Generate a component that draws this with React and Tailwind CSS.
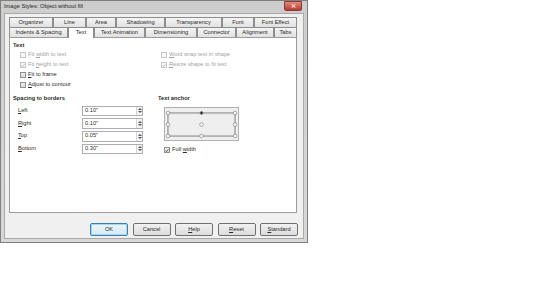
import React from "react";

function Check({ checked, disabled }) {
  return (
    <span
      className={
        disabled
          ? "w-[6px] h-[6px] shrink-0 border border-[#c6c6c6] bg-[#f7f7f7] flex items-center justify-center"
          : "w-[6px] h-[6px] shrink-0 border border-[#8e8f8f] bg-linear-to-b from-[#f0f0f0] to-[#dcdcdc] flex items-center justify-center"
      }
    >
      {checked && (
        <svg width="5" height="5" viewBox="0 0 5 5">
          <path
            d="M0.6 2.5 L1.9 3.9 L4.4 0.9"
            stroke={disabled ? "#a9a9a9" : "#333"}
            strokeWidth="0.9"
            fill="none"
          />
        </svg>
      )}
    </span>
  );
}

function CheckRow({ checked, disabled, children }) {
  return (
    <div className="h-[10px] flex items-center gap-[2px]">
      <Check checked={checked} disabled={disabled} />
      <span className={disabled ? "text-[#a2a2a2]" : "text-[#2a2a2a]"}>{children}</span>
    </div>
  );
}

function Tab({ w, children, selected }) {
  if (selected) {
    return (
      <div
        style={{ width: w }}
        className="h-[11px] -mt-px -mb-px relative z-10 bg-white border border-b-0 border-[#8d8d8d] flex items-center justify-center"
      >
        {children}
      </div>
    );
  }
  return (
    <div
      style={{ width: w }}
      className="h-[10px] border border-b-0 border-[#8d8d8d] bg-linear-to-b from-[#f4f4f4] to-[#e1e1e1] flex items-center justify-center"
    >
      {children}
    </div>
  );
}

function Spin({ value }) {
  return (
    <div className="w-[61px] h-[10.7px] bg-white border border-[#abadb3] flex items-center">
      <span className="flex-1 pl-[2px] text-[#333]">{value}</span>
      <div className="w-[6px] h-full border-l border-[#d5d5d5] bg-[#f3f3f3] flex flex-col items-center justify-center gap-[1px]">
        <svg width="4" height="2" viewBox="0 0 4 2">
          <path d="M0 2 L2 0 L4 2 Z" fill="#555" />
        </svg>
        <svg width="4" height="2" viewBox="0 0 4 2">
          <path d="M0 0 L2 2 L4 0 Z" fill="#555" />
        </svg>
      </div>
    </div>
  );
}

function Btn({ children, focus }) {
  return (
    <div
      className={
        focus
          ? "w-[38px] h-[13px] rounded-[2px] border border-[#3c7fb1] bg-linear-to-b from-[#eaf6fd] to-[#d7e9f3] flex items-center justify-center shadow-[inset_0_0_0_1px_#a8d8ee]"
          : "w-[38px] h-[13px] rounded-[2px] border border-[#707070] bg-linear-to-b from-[#f2f2f2] to-[#dcdcdc] flex items-center justify-center"
      }
    >
      {children}
    </div>
  );
}

function Anchor() {
  const pts = [
    [3, 5],
    [36.5, 5],
    [70, 5],
    [3, 16.5],
    [36.5, 16.5],
    [70, 16.5],
    [3, 28],
    [36.5, 28],
    [70, 28],
  ];
  return (
    <div className="w-[75px] h-[34px] border border-[#b0b0b0] bg-[#efefef]">
      <svg width="73" height="32" viewBox="0 0 73 32">
        <rect x="3" y="5" width="67" height="23" fill="none" stroke="#777" strokeWidth="1" />
        <rect x="4" y="6" width="65" height="21" fill="none" stroke="#dcdcdc" strokeWidth="0.6" />
        {pts.map(([x, y], i) => (
          <circle
            key={i}
            cx={x}
            cy={y}
            r={i === 1 ? 1.4 : 1.8}
            fill={i === 1 ? "#222" : "#fafafa"}
            stroke="#777"
            strokeWidth="0.6"
          />
        ))}
      </svg>
    </div>
  );
}

export default function App() {
  return (
    <div className="w-[540px] h-[304px] bg-white font-['Liberation_Sans',Arial,sans-serif] text-[5.7px] leading-none text-[#2a2a2a]">
      <div className="w-[308px] h-[243px] flex flex-col bg-linear-to-b from-[#cdcdcd] to-[#d8d8d8] border border-[#7f7f7f]">
        {/* Title bar */}
        <div className="h-[12px] flex items-center pl-[3px] pr-[5px] shrink-0">
          <span className="text-[#1e1e1e]">Image Styles: Object without fill</span>
          <div className="ml-auto -mt-[2px] w-[18px] h-[10px] rounded-b-[2px] border border-[#8a3a32] bg-linear-to-b from-[#e0897e] to-[#b83a2c] flex items-center justify-center">
            <svg width="5" height="4" viewBox="0 0 5 4">
              <path d="M0.5 0.3 L4.5 3.7 M4.5 0.3 L0.5 3.7" stroke="#fff" strokeWidth="1" />
            </svg>
          </div>
        </div>
        {/* Client */}
        <div className="flex-1 mx-[3px] mb-[3px] bg-[#f0f0f0] border border-[#a9a9a9] flex flex-col px-[4px] pt-[3px]">
          {/* Tabs */}
          <div className="flex">
            <Tab w={44}>Organizer</Tab>
            <Tab w={33}>Line</Tab>
            <Tab w={30}>Area</Tab>
            <Tab w={49}>Shadowing</Tab>
            <Tab w={57}>Transparency</Tab>
            <Tab w={32}>Font</Tab>
            <Tab w={43}>Font Effect</Tab>
          </div>
          <div className="flex items-end h-[10px]">
            <Tab w={59}>Indents &amp; Spacing</Tab>
            <Tab w={26} selected>
              Text
            </Tab>
            <Tab w={51}>Text Animation</Tab>
            <Tab w={52}>Dimensioning</Tab>
            <Tab w={39}>Connector</Tab>
            <Tab w={38}>Alignment</Tab>
            <Tab w={23}>Tabs</Tab>
          </div>
          {/* Panel */}
          <div className="w-[288px] h-[176px] bg-white border border-[#9c9c9c] pl-[3px] pt-[4px]">
            <div className="h-[8px] flex items-center font-bold">Text</div>
            <div className="flex">
              <div className="w-[148px] pl-[7px]">
                <CheckRow disabled>Fit <u>w</u>idth to text</CheckRow>
                <CheckRow disabled checked>
                  Fit <u>h</u>eight to text
                </CheckRow>
                <CheckRow>
                  <u>F</u>it to frame
                </CheckRow>
                <CheckRow>
                  <u>A</u>djust to contour
                </CheckRow>
              </div>
              <div>
                <CheckRow disabled>
                  <u>W</u>ord wrap text in shape
                </CheckRow>
                <CheckRow disabled checked>
                  <u>R</u>esize shape to fit text
                </CheckRow>
              </div>
            </div>
            <div className="flex mt-[5px]">
              <div className="w-[145px]">
                <div className="h-[8px] flex items-center font-bold">Spacing to borders</div>
                <div className="mt-[2.5px] flex flex-col gap-[2px]">
                  {[
                    ["L", "eft", "0.10\""],
                    ["R", "ight", "0.10\""],
                    ["T", "op", "0.05\""],
                    ["B", "ottom", "0.30\""],
                  ].map(([a, b, v]) => (
                    <div key={a} className="flex items-center h-[10.7px]">
                      <span className="w-[69px] pl-[5px]">
                        <u>{a}</u>
                        {b}
                      </span>
                      <Spin value={v} />
                    </div>
                  ))}
                </div>
              </div>
              <div>
                <div className="h-[8px] flex items-center font-bold">Text anchor</div>
                <div className="mt-[4px] ml-[6px]">
                  <Anchor />
                  <div className="mt-[4px]">
                    <CheckRow checked>
                      Full <u>w</u>idth
                    </CheckRow>
                  </div>
                </div>
              </div>
            </div>
          </div>
          {/* Buttons */}
          <div className="mt-[10px] flex justify-end gap-[4.5px] pr-[0px] w-[289px]">
            <Btn focus>OK</Btn>
            <Btn>Cancel</Btn>
            <Btn>
              <u>H</u>elp
            </Btn>
            <Btn>
              <u>R</u>eset
            </Btn>
            <Btn>
              <u>S</u>tandard
            </Btn>
          </div>
        </div>
      </div>
    </div>
  );
}
